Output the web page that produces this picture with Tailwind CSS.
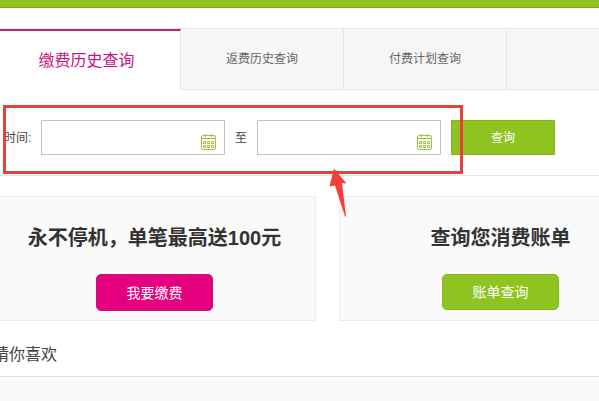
<!DOCTYPE html>
<html lang="zh-CN">

<head>
  <meta charset="UTF-8" />
  <title>缴费历史查询</title>
  <meta name="viewport" content="width=device-width, initial-scale=1.0" />
  <script src="https://cdn.jsdelivr.net/npm/@tailwindcss/browser@4"></script>
</head>

<body class="flex min-h-screen flex-col overflow-x-hidden bg-white font-['Liberation_Sans','Noto_Sans_CJK_SC',sans-serif] text-xs text-[#444]">

  <header class="h-2 border-b border-[#7fa82a] bg-[#8fc31f]"></header>

  <main class="-ml-[7px] mt-5 flex flex-1 flex-col">

    <!-- tabs -->
    <nav class="flex h-[62px] border-t border-[#e6e6e6] bg-[#f6f6f6] text-[#666]">
      <a href="#" class="flex w-[188px] items-center justify-center border-t-2 border-r border-t-[#b8246f] border-r-[#e6e6e6] bg-white text-base text-[#d1127c]">缴费历史查询</a>
      <a href="#" class="flex w-[163px] items-center justify-center border-r border-b border-[#e6e6e6]">返费历史查询</a>
      <a href="#" class="flex w-[163px] items-center justify-center border-r border-b border-[#e6e6e6]">付费计划查询</a>
      <div class="flex-1 border-b border-[#e6e6e6]"></div>
    </nav>

    <!-- search by date -->
    <form class="relative flex items-center gap-2.5 border-b border-[#e6e6e6] pt-[30px] pb-5 pl-[11px]">
      <label for="startDate" class="w-[27px] whitespace-nowrap">时间:</label>
      <div class="relative">
        <input id="startDate" type="text" class="block h-[35px] w-[184px] border border-[#c3c3c3] bg-white pr-8 pl-2 outline-none" />
        <svg class="pointer-events-none absolute right-[9px] bottom-[5px]" width="15" height="16" viewBox="0 0 15 16" fill="none" stroke="#9cc23c">
          <rect x="0.5" y="1.5" width="14" height="14" rx="1.5" />
          <path d="M0.5 4.5h14M4.5 0v3M10.5 0v3" />
          <path d="M2.5 7.5h2v2h-2zM6.5 7.5h2v2h-2zM10.5 7.5h2v2h-2zM2.5 11.5h2v2h-2zM6.5 11.5h2v2h-2zM10.5 11.5h2v2h-2z" stroke-linejoin="round" />
        </svg>
      </div>
      <label for="endDate">至</label>
      <div class="relative">
        <input id="endDate" type="text" class="block h-[35px] w-[184px] border border-[#c3c3c3] bg-white pr-8 pl-2 outline-none" />
        <svg class="pointer-events-none absolute right-[9px] bottom-[5px]" width="15" height="16" viewBox="0 0 15 16" fill="none" stroke="#9cc23c">
          <rect x="0.5" y="1.5" width="14" height="14" rx="1.5" />
          <path d="M0.5 4.5h14M4.5 0v3M10.5 0v3" />
          <path d="M2.5 7.5h2v2h-2zM6.5 7.5h2v2h-2zM10.5 7.5h2v2h-2zM2.5 11.5h2v2h-2zM6.5 11.5h2v2h-2zM10.5 11.5h2v2h-2z" stroke-linejoin="round" />
        </svg>
      </div>
      <button type="button" class="h-[35px] w-[104px] border border-[#84b51c] bg-[#8fc31f] text-white">查询</button>

      <!-- highlight box and arrow -->
      <div class="pointer-events-none absolute top-[15px] left-[10px] h-[69px] w-[460px] border-3 border-[#e93f3f]"></div>
      <svg class="pointer-events-none absolute top-[78px] left-[336px] z-10" width="18" height="49" viewBox="0 0 18 49">
        <path d="M5 0.5L17.5 15.5L13 15L17 48.5L16 48.5L6 17.5L0.5 18.5Z" fill="#fb3a3a" />
      </svg>
    </form>

    <!-- promo cards -->
    <div class="mt-5 flex gap-[23px] overflow-hidden">
      <section class="flex h-[125px] w-[323px] shrink-0 flex-col items-center border border-[#ececec] bg-[#fafafa] pt-[27px]">
        <h2 class="text-xl leading-7 font-bold text-[#333]">永不停机，单笔最高送100元</h2>
        <button type="button" class="mt-[22px] h-[37px] w-[117px] rounded-[5px] border border-[#cf0f78] bg-[#e4007f] text-sm text-white">我要缴费</button>
      </section>
      <section class="flex h-[125px] w-[323px] shrink-0 flex-col items-center border border-[#ececec] bg-[#fafafa] pt-[27px]">
        <h2 class="text-xl leading-7 font-bold text-[#333]">查询您消费账单</h2>
        <button type="button" class="mt-[22px] h-9 w-[117px] rounded-[5px] border border-[#84b51c] bg-[#8fc31f] text-sm text-white">账单查询</button>
      </section>
    </div>

    <h3 class="pt-5 pb-2 text-base leading-[27px] text-[#444]">猜你喜欢</h3>
    <div class="flex-1 border-t border-[#e2e2e2] bg-[#fafafa]"></div>
  </main>

</body>

</html>
